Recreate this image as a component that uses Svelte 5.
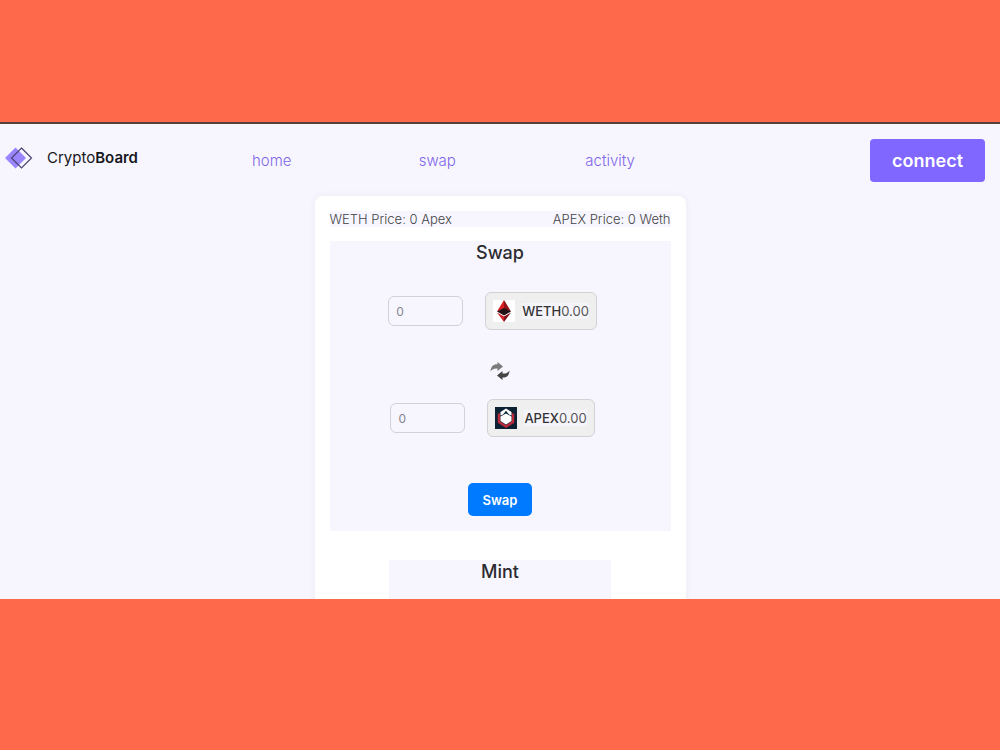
<script>
  let paid = $state('');
  let received = $state('');
  const links = ['home', 'swap', 'activity'];
</script>

<div class="stage">
  <div class="screen">
    <header>
      <a class="brand" href="#home">
        <svg width="28" height="22" viewBox="0 0 28 22" aria-hidden="true">
          <path d="M10.500 0.500 L21 11 L10.500 21.500 L0 11 Z" fill="#9a85ff" />
          <path d="M16.500 1 L26.500 11 L16.500 21 L6.500 11 Z" fill="none" stroke="#4a4470" stroke-width="1.200" />
        </svg>
        <span>Crypto<b>Board</b></span>
      </a>
      {#each links as link}
        <a class="link" href={'#' + link}>{link}</a>
      {/each}
      <button class="connect" type="button">connect</button>
    </header>

    <main>
      <div class="prices">
        <span>WETH Price: 0 Apex</span>
        <span>APEX Price: 0 Weth</span>
      </div>

      <section class="swap">
        <h2>Swap</h2>
        <div class="row">
          <input type="text" placeholder="0" aria-label="WETH amount" bind:value={paid} />
          <button class="token" type="button">
            <svg width="22" height="22" viewBox="0 0 22 22" aria-hidden="true">
              <rect width="22" height="22" fill="#fff" />
              <path d="M11 0 L4 11.500 L11 9 Z" fill="#d81f22" />
              <path d="M11 0 L18 11.500 L11 9 Z" fill="#8f1218" />
              <path d="M4 11.500 L11 8 L18 11.500 L11 15.500 Z" fill="#241316" />
              <path d="M4 12.500 L11 16.500 V22 Z" fill="#d3222a" />
              <path d="M18 12.500 L11 16.500 V22 Z" fill="#7d1219" />
            </svg>
            <span class="name">WETH<span class="balance">0.00</span></span>
          </button>
        </div>

        <svg class="arrows" width="20" height="18" viewBox="0 0 20 18" aria-hidden="true">
          <path d="M0.500 9.500 C0.800 4.300 3.500 2 7.500 2.200 V0 L13 4.500 L7.500 9 V6.500 C4.500 6.200 2.500 6.800 0.500 9.500 Z" fill="#7b7b7b" />
          <path d="M19.500 8.500 C19.200 13.700 16.500 15.800 12.500 15.600 V18 L7 13.500 L12.500 9 V11.500 C15.500 11.800 17.500 11.200 19.500 8.500 Z" fill="#444" />
        </svg>

        <div class="row">
          <input type="text" placeholder="0" aria-label="APEX amount" bind:value={received} />
          <button class="token" type="button">
            <svg width="22" height="22" viewBox="0 0 22 22" aria-hidden="true">
              <rect width="22" height="22" fill="#0c2233" />
              <path d="M4 6.500 V15 L11 19.500 L18 15 V6.500" fill="none" stroke="#b92a3b" stroke-width="2.500" />
              <path d="M11 6.500 L16.500 9.500 V14 L11 17.500 L5.500 14 V9.500 Z" fill="#fff" />
              <path d="M5.500 8.500 V5 L11 1.500 L16.500 5 V8.500 L14 7.500 L11 3.800 L8 7.500 Z" fill="#fff" />
            </svg>
            <span class="name">APEX<span class="balance">0.00</span></span>
          </button>
        </div>

        <button class="submit" type="button">Swap</button>
      </section>

      <section class="mint">
        <h2>Mint</h2>
      </section>
    </main>
  </div>
</div>

<style>
  :global(body) {
    background: #ff694b;
  }
  .stage {
    box-sizing: border-box;
    height: 100vh;
    padding: 122px 0 151px;
    font-family: Inter, 'Liberation Sans', sans-serif;
    color: #333;
  }
  .screen {
    box-sizing: border-box;
    height: 100%;
    overflow: hidden;
    border-top: 2px solid #55423f;
    background: #f7f6ff;
  }
  header {
    display: grid;
    grid-template-columns: 3fr 2fr 2fr 2fr 3fr;
    align-items: center;
    height: 72px;
  }
  a {
    text-decoration: none;
  }
  .brand {
    display: flex;
    align-items: center;
    gap: 14px;
    padding: 0 0 4px 5px;
    color: #17171c;
    font-size: 15px;
    line-height: 22px;
  }
  .brand b {
    font-weight: 600;
  }
  .link {
    padding: 2px 0 0 2px;
    color: #7f66e8;
    font-size: 15px;
    font-weight: 300;
    line-height: 20px;
  }
  button,
  input {
    box-sizing: border-box;
    font-family: inherit;
  }
  .connect {
    justify-self: end;
    height: 43px;
    margin-right: 15px;
    padding: 0 22px;
    border: 0;
    border-radius: 4px;
    background: #8067ff;
    color: #fff;
    font-size: 18px;
    font-weight: 600;
  }
  main {
    box-sizing: border-box;
    width: 100%;
    max-width: 371px;
    margin: 0 auto;
    padding: 15px 15px 40px;
    border-radius: 8px;
    background: #fff;
    box-shadow: 0 0 8px rgba(0, 0, 0, 0.05);
  }
  .prices {
    display: flex;
    justify-content: space-between;
    background: #f7f6ff;
    color: #444;
    font-size: 13px;
    font-weight: 300;
    line-height: 16px;
  }
  .swap {
    display: flex;
    flex-direction: column;
    align-items: center;
    margin-top: 14px;
    padding-bottom: 15px;
    background: #f7f6ff;
  }
  h2 {
    margin: 0;
    color: #2b2b30;
    font-size: 18px;
    font-weight: 500;
    line-height: 24px;
    text-align: center;
  }
  .row {
    display: flex;
    align-items: center;
    gap: 22px;
    padding-right: 15px;
  }
  h2 + .row {
    margin-top: 27px;
  }
  input {
    width: 75px;
    height: 30px;
    padding: 0 7px;
    border: 1px solid #d2d1d8;
    border-radius: 6px;
    background: transparent;
    color: #444;
    font-size: 12px;
  }
  input::placeholder {
    color: #85858c;
  }
  .token {
    display: flex;
    align-items: center;
    gap: 7px;
    height: 38px;
    padding: 0 7px;
    border: 1px solid #d2d2d4;
    border-radius: 6px;
    background: #efefef;
    color: #333;
    font-size: 13px;
    font-weight: 500;
    line-height: 16px;
  }
  .name {
    background: #f5f4fa;
  }
  .balance {
    color: #555;
    font-weight: 400;
  }
  .arrows {
    margin: 32px 0 19px;
  }
  .submit {
    height: 33px;
    margin-top: 46px;
    padding: 0 15px;
    border: 0;
    border-radius: 5px;
    background: #007bff;
    color: #fff;
    font-size: 13px;
    font-weight: 600;
  }
  .mint {
    width: 65%;
    min-height: 150px;
    margin: 29px auto 0;
    background: #f7f6ff;
  }
</style>
